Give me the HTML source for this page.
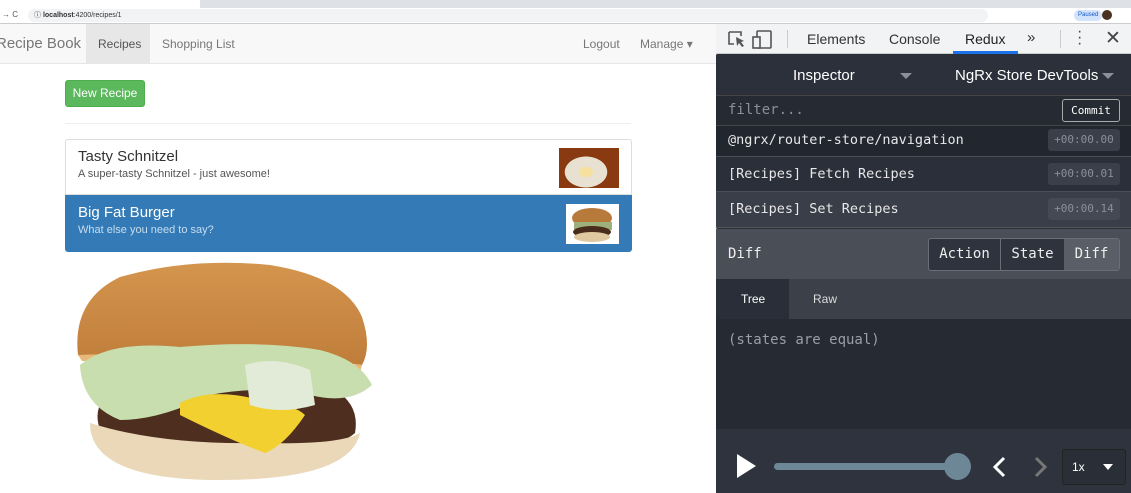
<!DOCTYPE html>
<html><head><meta charset="utf-8"><style>
*{box-sizing:border-box;margin:0;padding:0}
body{width:1131px;height:493px;overflow:hidden;position:relative;background:#fff;font-family:"Liberation Sans",sans-serif}
.abs{position:absolute}
.mono{font-family:"DejaVu Sans Mono","Liberation Mono",monospace}
</style></head><body>
<!-- browser chrome -->
<div class="abs" style="left:0;top:0;width:1131px;height:8px;background:#dee1e6"></div>
<div class="abs" style="left:0;top:0;width:200px;height:8px;background:#fff"></div>
<div class="abs" style="left:0;top:8px;width:1131px;height:16px;background:#fff;border-bottom:1px solid #ccc"></div>
<div class="abs" style="left:2px;top:10px;font-size:8px;color:#555">→ C</div>
<div class="abs" style="left:28px;top:9px;width:960px;height:13px;border-radius:7px;background:#f1f3f4"></div>
<div class="abs" style="left:34px;top:10px;font-size:7px;color:#333">ⓘ <b>localhost</b>:4200/recipes/1</div>
<div class="abs" style="left:1074px;top:10px;width:28px;height:11px;border-radius:6px;background:#d2e3fc;font-size:6px;color:#1a57c6;padding:2px 4px">Paused</div>
<div class="abs" style="left:1102px;top:10px;width:10px;height:10px;border-radius:50%;background:#4a3020"></div>
<!-- app navbar -->
<div class="abs" style="left:0;top:24px;width:716px;height:40px;background:#f8f8f8;border-bottom:1px solid #e7e7e7"></div>
<div class="abs" style="left:-4px;top:35px;font-size:15px;color:#777">Recipe Book</div>
<div class="abs" style="left:86px;top:24px;width:64px;height:39px;background:#e7e7e7"></div>
<div class="abs" style="left:98px;top:37px;font-size:12px;color:#555">Recipes</div>
<div class="abs" style="left:162px;top:37px;font-size:12px;color:#777">Shopping List</div>
<div class="abs" style="left:583px;top:37px;font-size:12px;color:#777">Logout</div>
<div class="abs" style="left:640px;top:37px;font-size:12px;color:#777">Manage ▾</div>
<!-- content -->
<div class="abs" style="left:65px;top:80px;width:80px;height:27px;background:#5cb85c;border:1px solid #4cae4c;border-radius:3px;color:#fff;font-size:12px;text-align:center;line-height:25px">New Recipe</div>
<div class="abs" style="left:65px;top:123px;width:566px;height:1px;background:#eee"></div>
<div class="abs" style="left:65px;top:139px;width:567px;height:56px;border:1px solid #ddd;border-radius:3px 3px 0 0;background:#fff"></div>
<div class="abs" style="left:78px;top:148px;font-size:15px;color:#333">Tasty Schnitzel</div>
<div class="abs" style="left:78px;top:168px;font-size:11px;color:#555">A super-tasty Schnitzel - just awesome!</div>
<div class="abs" style="left:559px;top:148px;width:60px;height:40px;background:radial-gradient(ellipse at 45% 60%,#f5e0a0 0 15%,#e8e0d0 16% 45%,#8a3a10 46%)"></div>
<div class="abs" style="left:65px;top:195px;width:567px;height:57px;background:#337ab7;border:1px solid #337ab7;border-radius:0 0 3px 3px"></div>
<div class="abs" style="left:78px;top:204px;font-size:15px;color:#fff">Big Fat Burger</div>
<div class="abs" style="left:78px;top:224px;font-size:11px;color:#c7ddef">What else you need to say?</div>
<div class="abs" style="left:566px;top:204px;width:53px;height:40px;background:#fff"></div>
<svg class="abs" style="left:566px;top:204px" width="53" height="40"><ellipse cx="26" cy="14" rx="20" ry="10" fill="#b87a3a"/><rect x="8" y="18" width="38" height="8" fill="#9bb07a"/><ellipse cx="26" cy="28" rx="19" ry="6" fill="#4a2c1c"/><ellipse cx="26" cy="33" rx="18" ry="5" fill="#e0c8a0"/></svg>
<!-- big burger -->
<svg class="abs" style="left:60px;top:255px" width="330" height="235">
<defs><linearGradient id="bun" x1="0" y1="0" x2="0" y2="1"><stop offset="0" stop-color="#d4954e"/><stop offset="1" stop-color="#bf7d3a"/></linearGradient></defs>
<path d="M40 175 Q30 145 60 135 L275 135 Q300 150 295 178 Q270 200 170 200 Q60 200 40 175Z" fill="#4e2e1e"/>
<path d="M30 168 Q30 225 160 225 Q290 225 300 178 Q280 190 200 188 Q100 190 30 168Z" fill="#ead8b8"/>
<path d="M18 100 Q12 45 60 22 Q130 2 210 10 Q285 22 302 62 Q312 92 302 110 Q200 98 18 100Z" fill="url(#bun)"/>
<path d="M18 100 Q100 96 302 110 L300 118 Q180 106 22 106Z" fill="#e8b878"/>
<path d="M20 110 Q50 85 120 92 Q200 85 260 95 Q300 105 312 130 Q290 150 250 140 Q200 130 150 140 Q100 165 60 165 Q22 150 20 110Z" fill="#c9deae"/>
<path d="M120 148 Q150 132 200 145 Q235 150 245 160 Q225 190 205 198 Q170 185 120 160Z" fill="#f2d030"/>
<path d="M185 110 Q215 100 250 115 L255 150 Q220 160 190 150Z" fill="#e2ead8"/>
</svg>
<!-- devtools -->
<div class="abs" style="left:716px;top:24px;width:415px;height:469px;background:#2b2f39;border-left:1px solid #999"></div>
<div class="abs" style="left:716px;top:24px;width:415px;height:30px;background:#f1f3f4;border-bottom:1px solid #ccc"></div>
<svg class="abs" style="left:726px;top:29px" width="50" height="22"><path d="M3 3h12v4M3 3v12h5" stroke="#555" stroke-width="1.6" fill="none"/><path d="M10 8l8 4-3 1 3 4-2 1-3-4-2 3z" fill="#555"/><rect x="31" y="2" width="14" height="17" rx="1" stroke="#555" stroke-width="1.6" fill="none"/><rect x="27" y="8" width="7" height="11" stroke="#555" stroke-width="1.6" fill="#f1f3f4"/></svg>
<div class="abs" style="left:787px;top:30px;width:1px;height:18px;background:#ccc"></div>
<div class="abs" style="left:807px;top:31px;font-size:14px;color:#333">Elements</div>
<div class="abs" style="left:889px;top:31px;font-size:14px;color:#333">Console</div>
<div class="abs" style="left:965px;top:31px;font-size:14px;color:#222">Redux</div>
<div class="abs" style="left:953px;top:51px;width:65px;height:3px;background:#1a73e8"></div>
<div class="abs" style="left:1027px;top:29px;font-size:15px;color:#333">»</div>
<div class="abs" style="left:1060px;top:30px;width:1px;height:18px;background:#ccc"></div>
<div class="abs" style="left:1077px;top:29px;font-size:16px;color:#444;line-height:6px">·<br>·<br>·</div>
<div class="abs" style="left:1105px;top:27px;font-size:19px;color:#444">✕</div>
<!-- inspector -->
<div class="abs" style="left:716px;top:55px;width:415px;height:40px;background:#2b303b"></div>
<div class="abs" style="left:793px;top:67px;font-size:15px;color:#fff">Inspector</div>
<div class="abs" style="left:900px;top:73px;border:6px solid transparent;border-top:6px solid #8a8f99"></div>
<div class="abs" style="left:955px;top:67px;font-size:15px;color:#fff">NgRx Store DevTools</div>
<div class="abs" style="left:1102px;top:73px;border:6px solid transparent;border-top:6px solid #8a8f99"></div>
<div class="abs" style="left:716px;top:95px;width:415px;height:31px;background:#262a33;border-top:1px solid #444;border-bottom:1px solid #444"></div>
<div class="abs mono" style="left:728px;top:102px;font-size:14px;color:#8a8f99">filter...</div>
<div class="abs mono" style="left:1062px;top:99px;width:58px;height:23px;border:1px solid #aaa;border-radius:3px;font-size:11px;color:#fff;text-align:center;line-height:21px">Commit</div>
<div class="abs" style="left:716px;top:126px;width:415px;height:31px;background:#22262e;border-bottom:1px solid #4a4e57"></div>
<div class="abs mono" style="left:728px;top:132px;font-size:13.5px;color:#e8e8e8">@ngrx/router-store/navigation</div>
<div class="abs" style="left:716px;top:157px;width:415px;height:35px;background:#2b2f3a;border-bottom:1px solid #4a4e57"></div>
<div class="abs mono" style="left:728px;top:166px;font-size:13.5px;color:#e8e8e8">[Recipes] Fetch Recipes</div>
<div class="abs" style="left:716px;top:192px;width:415px;height:36px;background:#3a3e48;border-bottom:1px solid #555"></div>
<div class="abs mono" style="left:728px;top:201px;font-size:13.5px;color:#e8e8e8">[Recipes] Set Recipes</div>
<div class="abs mono" style="left:1048px;top:129px;width:72px;height:22px;background:#3b3f49;border-radius:3px;font-size:11px;color:#8a8f99;text-align:center;line-height:22px">+00:00.00</div>
<div class="abs mono" style="left:1048px;top:163px;width:72px;height:22px;background:#3b3f49;border-radius:3px;font-size:11px;color:#8a8f99;text-align:center;line-height:22px">+00:00.01</div>
<div class="abs mono" style="left:1048px;top:198px;width:72px;height:22px;background:#454953;border-radius:3px;font-size:11px;color:#8a8f99;text-align:center;line-height:22px">+00:00.14</div>
<!-- diff bar -->
<div class="abs" style="left:716px;top:229px;width:415px;height:50px;background:#4a4e57"></div>
<div class="abs mono" style="left:728px;top:246px;font-size:14px;color:#eee">Diff</div>
<div class="abs mono" style="left:928px;top:238px;width:192px;height:33px;border:1px solid #6a6e77;border-radius:3px;background:#2f333d;display:flex;font-size:14px;color:#eee">
<div style="width:72px;text-align:center;line-height:31px;border-right:1px solid #6a6e77">Action</div>
<div style="width:63px;text-align:center;line-height:31px">State</div>
<div style="flex:1;text-align:center;line-height:31px;background:#5a5e67">Diff</div></div>
<div class="abs" style="left:716px;top:279px;width:415px;height:40px;background:#3c4049"></div>
<div class="abs" style="left:716px;top:279px;width:73px;height:40px;background:#2a2e38"></div>
<div class="abs" style="left:741px;top:292px;font-size:12px;color:#fff">Tree</div>
<div class="abs" style="left:813px;top:292px;font-size:12px;color:#ddd">Raw</div>
<div class="abs" style="left:716px;top:319px;width:415px;height:110px;background:#262a33"></div>
<div class="abs mono" style="left:728px;top:332px;font-size:14px;color:#9a9ea6">(states are equal)</div>
<!-- bottom -->
<div class="abs" style="left:716px;top:429px;width:415px;height:64px;background:#2f333d"></div>
<svg class="abs" style="left:735px;top:453px" width="22" height="26"><path d="M2 1L21 13L2 25Z" fill="#fff"/></svg>
<div class="abs" style="left:774px;top:463px;width:185px;height:7px;border-radius:4px;background:#6e8797"></div>
<div class="abs" style="left:944px;top:453px;width:27px;height:27px;border-radius:50%;background:#6e8797"></div>
<svg class="abs" style="left:990px;top:454px" width="60" height="26"><path d="M14 4L5 13L14 22" stroke="#fff" stroke-width="3" fill="none"/><path d="M46 4L55 13L46 22" stroke="#777" stroke-width="3" fill="none"/></svg>
<div class="abs" style="left:1062px;top:449px;width:64px;height:36px;border:1px solid #222;border-radius:3px;background:#2a2e37"></div>
<div class="abs" style="left:1072px;top:460px;font-size:12px;color:#fff">1x</div>
<div class="abs" style="left:1103px;top:464px;border:5px solid transparent;border-top:6px solid #fff"></div>
</body></html>
